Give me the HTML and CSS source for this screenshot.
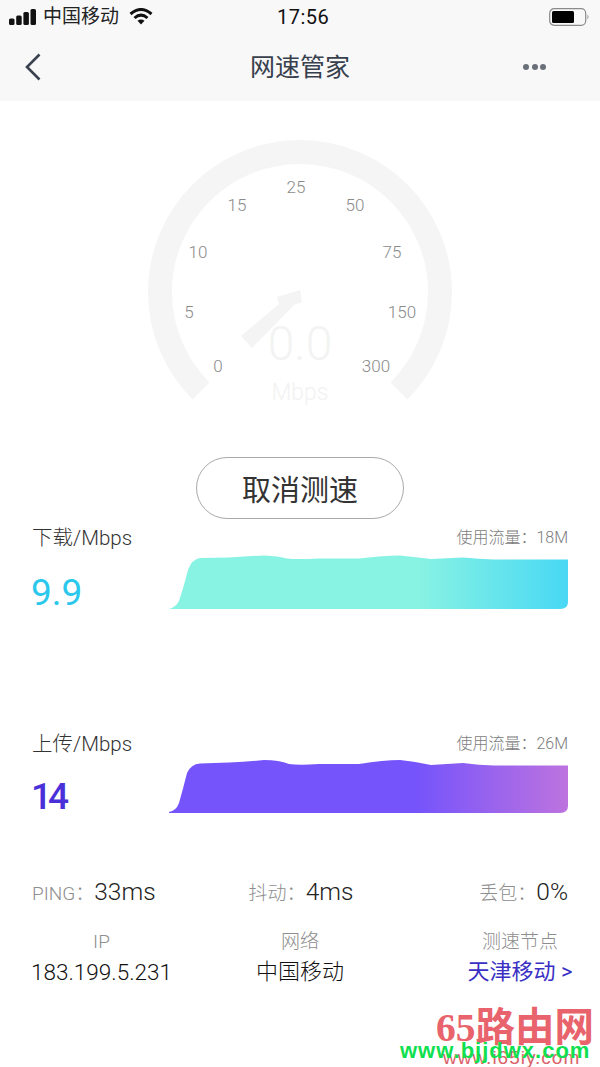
FILE: index.html
```html
<!DOCTYPE html>
<html lang="zh">
<head>
<meta charset="utf-8">
<title>网速管家</title>
<link rel="stylesheet" href="styles.css">
</head>
<body>
<div class="page">
  <header class="top">
    <div class="status">
      <div class="status-left">
        <svg class="signal" width="27" height="16" viewBox="0 0 27 16"><rect x="0" y="9.500" width="5.500" height="6.500" rx="1.500"/><rect x="7.200" y="6.500" width="5.500" height="9.500" rx="1.500"/><rect x="14.400" y="3" width="5.500" height="13" rx="1.500"/><rect x="21.500" y="0" width="5.500" height="16" rx="1.500"/></svg>
        <span class="carrier">中国移动</span>
        <svg class="wifi" width="24" height="17" viewBox="0 0 24 17"><path d="M1.500 6 Q12 -3 22.500 6" fill="none" stroke="#111" stroke-width="3"/><path d="M5.500 10 Q12 4.200 18.500 10" fill="none" stroke="#111" stroke-width="3"/><path d="M8.500 12.800 Q12 10 15.500 12.800 L12 16.500Z" fill="#111"/></svg>
      </div>
      <span class="clock">17:56</span>
      <svg class="battery" width="41" height="18" viewBox="0 0 41 18"><rect x="0.700" y="0.700" width="36" height="16.600" rx="4.500" fill="none" stroke="#8a8a8a" stroke-width="1.200"/><rect x="3" y="3" width="22" height="12" rx="1.500" fill="#000"/><path d="M38.500 6.500 Q40.500 9 38.500 11.500Z" fill="#8a8a8a"/></svg>
    </div>
    <nav class="nav">
      <svg class="back" width="18" height="28" viewBox="0 0 18 28"><path d="M15.500 1.500 L3 14 L15.500 26.500" fill="none" stroke="#39424e" stroke-width="2.600"/></svg>
      <h1 class="title">网速管家</h1>
      <div class="more"><i></i><i></i><i></i></div>
    </nav>
  </header>

  <section class="gauge-wrap">
    <svg class="gauge" width="320" height="300" viewBox="0 0 320 300">
      <path d="M61 252 A140 140 0 1 1 259 252" fill="none" stroke="#f5f5f5" stroke-width="24"/>
      <path d="M101 197 L139 165 L137 158 L160 151 L162 163 L154 166 L112 209Z" fill="#f4f4f4"/>
      <g class="tick">
        <text x="78" y="233">0</text>
        <text x="49" y="179">5</text>
        <text x="58" y="119">10</text>
        <text x="97" y="72">15</text>
        <text x="156" y="54">25</text>
        <text x="215" y="72">50</text>
        <text x="252" y="119">75</text>
        <text x="262" y="179">150</text>
        <text x="236" y="233">300</text>
      </g>
      <text class="big" x="160" y="221">0.0</text>
      <text class="unit" x="160" y="261">Mbps</text>
    </svg>
    <button class="cancel">取消测速</button>
  </section>

  <section class="speed speed-down">
    <div class="speed-head">
      <span class="speed-name">下载/Mbps</span>
      <span class="usage">使用流量：18M</span>
    </div>
    <div class="speed-body">
      <span class="value value-down">9.9</span>
      <svg class="chart" width="399" height="54" viewBox="0 0 399 54">
        <defs><linearGradient id="g1" x1="0" x2="1" y1="0" y2="0"><stop offset="0.620" stop-color="#89f3e3"/><stop offset="1" stop-color="#48d8f4"/></linearGradient></defs>
        <path d="M0 54 Q7 52 10 46 Q14 34 19 15 Q23 4 31 3 L60 2.500 Q80 1 95 0.500 Q110 1 118 3.500 Q128 4.500 150 3.500 L190 3.500 Q215 0.500 231 0.500 Q248 2 262 4 Q278 3 294 2.500 Q310 4 325 4.500 L399 4.500 L399 47 Q399 54 391 54Z" fill="url(#g1)"/>
      </svg>
    </div>
  </section>

  <section class="speed speed-up">
    <div class="speed-head">
      <span class="speed-name">上传/Mbps</span>
      <span class="usage">使用流量：26M</span>
    </div>
    <div class="speed-body">
      <span class="value value-up">14</span>
      <svg class="chart" width="399" height="54" viewBox="0 0 399 54">
        <defs><linearGradient id="g2" x1="0" x2="1" y1="0" y2="0"><stop offset="0.620" stop-color="#7554fb"/><stop offset="1" stop-color="#bd73df"/></linearGradient></defs>
        <path d="M0 53 Q7 52 10 44 Q14 30 18 14 Q22 5 31 4.500 L60 3.500 Q80 2.500 95 1 Q110 1 120 5 Q130 6.500 150 5 L190 5 Q215 1 231 1 Q248 3 262 6 Q278 5 294 4 Q310 6 325 6.500 L399 6.500 L399 47 Q399 54 391 54 L0 54Z" fill="url(#g2)"/>
      </svg>
    </div>
  </section>

  <section class="stats">
    <div class="stat stat-left"><span class="label">PING：</span><span class="num">33ms</span></div>
    <div class="stat stat-mid"><span class="label">抖动：</span><span class="num">4ms</span></div>
    <div class="stat stat-right"><span class="label">丢包：</span><span class="num">0%</span></div>
  </section>

  <section class="info">
    <div class="info-col info-ip"><span class="label">IP</span><span class="info-val">183.199.5.231</span></div>
    <div class="info-col info-net"><span class="label">网络</span><span class="info-val">中国移动</span></div>
    <div class="info-col info-node"><span class="label">测速节点</span><span class="info-val link">天津移动 &gt;</span></div>
  </section>

  <div class="watermark">
    <div class="wm-big">65路由网</div>
    <div class="wm-back">www.i65iy.com</div>
    <div class="wm-front">www.bjjdwx.com</div>
  </div>
</div>
</body>
</html>
```
FILE: styles.css
```css
* { box-sizing: border-box; }
html, body { margin: 0; padding: 0; background: #fff; }
body { font-family: Roboto, "Noto Sans CJK SC", sans-serif; font-weight: 300; color: #333; }
.page { width: 600px; height: 1067px; position: relative; overflow: hidden; background: #fff; }

.top { background: #f8f8f9; height: 101px; }
.status { height: 34px; display: flex; align-items: center; justify-content: space-between; padding: 0 10px 1px 9px; position: relative; }
.status-left { display: flex; align-items: center; gap: 7px; width: 180px; }
.signal { fill: #111; flex: none; }
.carrier { font-size: 19px; font-weight: 400; color: #222; line-height: 24px; }
.wifi { margin-left: 3px; }
.clock { font-size: 20px; font-weight: 400; color: #111; letter-spacing: .5px; position: absolute; left: 277px; }
.battery { flex: none; }

.nav { height: 67px; display: flex; align-items: center; justify-content: space-between; padding: 0 54px 2px 24px; position: relative; }
.back { margin-top: 0; }
.title { position: absolute; left: 0; right: 0; top: 17px; margin: 0; text-align: center; font-size: 25px; line-height: 34px; font-weight: 400; color: #37404c; }
.more { display: flex; gap: 2.500px; margin-top: 1px; }
.more i { width: 6px; height: 6px; border-radius: 50%; background: #6a7079; display: block; }

.gauge-wrap { height: 418px; display: flex; flex-direction: column; align-items: center; padding-top: 38px; }
.gauge { display: block; flex: none; }
.tick text { font-size: 17px; fill: #8a8a8a; text-anchor: middle; }
.big { font-size: 48px; fill: #f3f3f3; text-anchor: middle; }
.unit { font-size: 23px; fill: #f2f2f2; text-anchor: middle; }
.cancel { flex: none; margin-top: 18px; width: 208px; height: 62px; border-radius: 31px; border: 1px solid #aaa; background: #fff; font: inherit; font-size: 29px; font-weight: 400; color: #333; padding: 0; }

.speed { padding: 0 32px; display: flex; flex-direction: column; }
.speed-down { height: 205px; padding-top: 3px; }
.speed-up { height: 150px; padding-top: 4px; }
.speed-head { display: flex; align-items: center; justify-content: space-between; height: 28px; }
.speed-name { font-size: 20.500px; color: #333; }
.usage { font-size: 16px; color: #7c7c7c; }
.speed-body { display: flex; align-items: center; justify-content: space-between; margin-top: 5px; }
.speed-up .speed-body { margin-top: 3px; }
.chart { display: block; }
.value { font-size: 37px; font-weight: 400; line-height: 32px; margin-top: 22px; margin-left: -1px; }
.value-down { color: #2cc8ec; }
.value-up { color: #4a30d8; font-weight: 500; letter-spacing: -4px; }

.label { color: #8e8e8e; }
.stats { display: grid; grid-template-columns: 1fr 1fr 1fr; padding: 0 32px; height: 34px; align-items: center; font-size: 19px; }
.stat { display: flex; align-items: baseline; }
.stat-mid { justify-content: center; padding-left: 2px; }
.stat-right { justify-content: flex-end; }
.num { font-size: 24.500px; color: #222; }

.info { display: grid; grid-template-columns: 139px 1fr 110px; padding: 0 25px 0 32px; margin-top: 20px; }
.info-col { display: flex; flex-direction: column; align-items: center; font-size: 19px; line-height: 28px; }
.info-col .label { font-size: 19px; line-height: 28px; }
.info-val { font-size: 22.500px; line-height: 32px; color: #111; white-space: nowrap; }
.info-net { padding-right: 36px; }
.info-net .info-val { font-size: 22px; }
.link { color: #3a30c4; font-size: 22px; font-weight: 400; }

.watermark { position: absolute; left: 396px; top: 1003px; width: 204px; height: 64px; }
.wm-big { position: absolute; right: 6px; top: 4px; font-size: 39.500px; line-height: 42px; font-weight: 700; color: #e8636b; font-family: "Liberation Serif", "Noto Sans CJK SC", serif; white-space: nowrap; }
.wm-back { position: absolute; left: 47px; top: 44px; font-size: 19px; font-weight: 400; line-height: 22px; color: #d9626a; white-space: nowrap; letter-spacing: 1px; font-family: "Liberation Sans", sans-serif; }
.wm-front { position: absolute; left: 4px; top: 36px; font-size: 22px; line-height: 24px; font-weight: 700; color: #10e050; white-space: nowrap; letter-spacing: 1px; font-family: "Liberation Sans", sans-serif; }
```
